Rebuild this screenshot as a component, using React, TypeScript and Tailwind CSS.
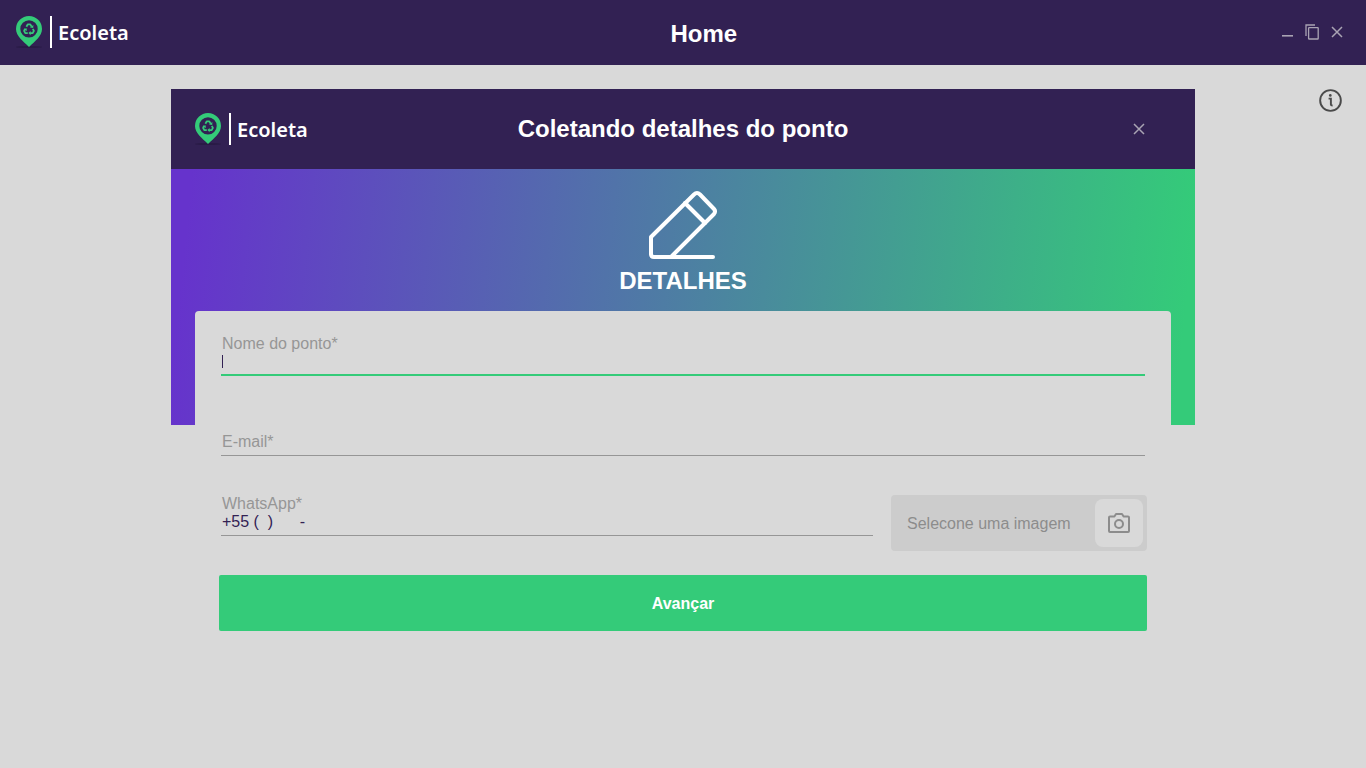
import type { ReactNode } from "react";

function Logo() {
  return (
    <div className="flex items-center text-white">
      <svg width="26" height="32" viewBox="0 0 26 32" aria-hidden="true">
        <ellipse cx="13" cy="31" rx="13" ry="1" fill="#291b45" />
        <path
          fill="#34cb79"
          fillRule="evenodd"
          d="M13 0a13 13 0 0 1 13 13c0 7-7 12-13 18C7 25 0 20 0 13A13 13 0 0 1 13 0Zm0 4.2a8.7 8.7 0 1 0 0 17.4 8.7 8.7 0 0 0 0-17.4Z"
        />
        <g fill="none" stroke="#34cb79" strokeWidth="1.8" strokeLinejoin="round">
          <path d="m10.4 10.8 1.3-2.4h2.6l1.4 2.4" />
          <path d="m16.8 12.8 1.1 2.1-1.2 2.2h-2.8" />
          <path d="M11.8 17.1H9.3l-1.2-2.2 1.2-2.1" />
        </g>
        <path fill="#34cb79" d="m14 11.6 3.2.3.2-2.8ZM14.6 15v4.2l-2.2-2.1ZM7.4 13.3l3.2-1.1.3 2.8Z" />
      </svg>
      <span className="ml-2 h-8 w-0.5 bg-white" />
      <span className="ml-1.5 pt-px font-['Noto_Sans',sans-serif] text-xl font-semibold">Ecoleta</span>
    </div>
  );
}

function CloseIcon() {
  return (
    <svg width="12" height="12" viewBox="0 0 12 12" fill="none" stroke="#a9a3b3" strokeWidth="1.5" aria-hidden="true">
      <path d="m1 1 10 10M11 1 1 11" />
    </svg>
  );
}

function IconButton({ label, children }: { label: string; children: ReactNode }) {
  return (
    <button type="button" aria-label={label} className="flex size-6 items-center justify-center">
      {children}
    </button>
  );
}

export default function App() {
  return (
    <div className="min-h-screen bg-[#d9d9d9] font-['Liberation_Sans',Arial,sans-serif] text-[#322153]">
      <header className="flex h-[65px] items-center justify-between bg-[#322153] px-4 pb-px">
        <Logo />
        <h1 className="pt-1 pl-1 text-center text-2xl font-bold text-white">Home</h1>
        <div className="flex justify-end gap-px pr-px">
          <IconButton label="Minimizar">
            <svg width="12" height="12" viewBox="0 0 12 12" aria-hidden="true">
              <path d="M1 9h11v1.6H1z" fill="#a9a3b3" />
            </svg>
          </IconButton>
          <IconButton label="Restaurar">
            <svg width="14" height="16" viewBox="0 0 14 16" fill="none" stroke="#a9a3b3" strokeWidth="1.3" aria-hidden="true">
              <path d="M1 12V1h9" />
              <rect x="3.6" y="3.6" width="9.6" height="11.4" rx=".6" />
            </svg>
          </IconButton>
          <IconButton label="Fechar janela">
            <CloseIcon />
          </IconButton>
        </div>
      </header>

      <main className="grid grid-cols-[1fr_minmax(0,1024px)_1fr] items-start pt-6">
        <section aria-labelledby="dialog-title" className="col-start-2">
          <div className="grid h-20 grid-cols-[1fr_auto_1fr] items-center bg-[#322153] px-6">
            <Logo />
            <h2 id="dialog-title" className="text-center text-2xl font-bold text-white">
              Coletando detalhes do ponto
            </h2>
            <div className="flex justify-end pr-5">
              <IconButton label="Fechar">
                <CloseIcon />
              </IconButton>
            </div>
          </div>

          <div className="h-64 bg-[linear-gradient(96deg,#6633cc_2%,#34cb79_98%)] px-6">
            <div className="flex h-[142px] flex-col items-center pt-5 text-white">
              <svg width="72" height="72" viewBox="0 0 72 72" fill="none" stroke="currentColor" strokeWidth="4" strokeLinecap="round" strokeLinejoin="round" aria-hidden="true">
                <path d="M66 68H7q-3 0-3-3V48L47 5.5q3-3 6 0L67 20q2 2 0 5L25 67" />
                <path d="m38 14 20 20" />
              </svg>
              <h3 className="mt-1 text-2xl leading-8 font-bold">DETALHES</h3>
            </div>

            <form className="rounded-t bg-[#d9d9d9] px-6 pt-6">
              <div className="mx-0.5 flex h-[41px] flex-col border-b-2 border-[#34cb79] pl-px">
                <label htmlFor="nome" className="h-[18px] text-base leading-[18px] text-[#969696]">Nome do ponto*</label>
                <div className="flex h-4 items-center">
                  <span className="h-[13px] w-px bg-[#322153]" />
                  <input id="nome" type="text" className="h-4 min-w-0 flex-1 caret-[#322153] outline-none" />
                </div>
              </div>

              <div className="mx-0.5 mt-14 flex h-6 items-start border-b border-[#969696] pl-px">
                <label htmlFor="email" className="text-base leading-5 text-[#969696]">E-mail*</label>
                <input id="email" type="email" className="h-4 min-w-0 flex-1 outline-none" />
              </div>

              <div className="mt-[39px] flex items-start gap-[18px]">
                <div className="ml-0.5 flex h-[41px] flex-1 flex-col border-b border-[#969696] pl-px">
                  <label htmlFor="whatsapp" className="h-[18px] text-base leading-[18px] text-[#969696]">WhatsApp*</label>
                  <input
                    id="whatsapp"
                    type="tel"
                    defaultValue={"+55 (  )      -"}
                    className="h-[18px] w-full text-base leading-[18px] whitespace-pre outline-none"
                  />
                </div>
                <div className="flex h-14 w-64 items-center justify-between rounded bg-[#cccccc] pr-1 pl-4">
                  <label htmlFor="imagem" className="pt-0.5 text-base text-[#8c8c8c]">Selecone uma imagem</label>
                  <button id="imagem" type="button" aria-label="Selecionar imagem" className="flex size-12 items-center justify-center rounded-lg bg-[#d9d9d9]">
                    <svg width="22" height="20" viewBox="0 0 22 20" fill="none" stroke="#8c8c8c" strokeWidth="2" strokeLinejoin="round" aria-hidden="true">
                      <path d="M1 4.5Q1 3.5 2 3.5h4.4L8 1h6l1.6 2.5H20q1 0 1 1V18q0 1-1 1H2q-1 0-1-1Z" />
                      <circle cx="11" cy="11" r="4" />
                    </svg>
                  </button>
                </div>
              </div>

              <button type="submit" className="mt-6 h-14 w-full rounded-xs bg-[#34cb79] pt-0.5 text-base font-bold text-white">
                Avançar
              </button>
            </form>
          </div>
        </section>

        <button type="button" aria-label="Informações" className="col-start-3 mr-6 justify-self-end">
          <svg width="23" height="23" viewBox="0 0 24 24" fill="none" stroke="#4a4a4a" strokeWidth="2" aria-hidden="true">
            <circle cx="12" cy="12" r="10.8" />
            <path d="M10 10h2.4v6.2q0 1 1.8 1" strokeWidth="2" />
            <circle cx="11.8" cy="6.7" r="1.4" fill="#4a4a4a" stroke="none" />
          </svg>
        </button>
      </main>
    </div>
  );
}
